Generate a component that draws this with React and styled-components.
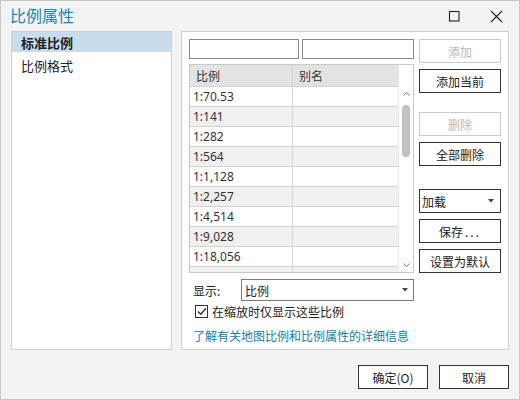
import React from "react";
import styled, { createGlobalStyle } from "styled-components";

const Global = createGlobalStyle`
  html, body { margin: 0; padding: 0; background: #f3f3f3; }
  * { box-sizing: border-box; }
  body { font-family: "Noto Sans", "Noto Sans CJK SC", sans-serif; font-size: 12px; color: #1e1e1e; }
`;

const Window = styled.div`
  width: 520px;
  height: 400px;
  background: #f3f3f3;
  border: 1px solid #c9c9c9;
  display: flex;
  flex-direction: column;
  overflow: hidden;
`;

const TitleBar = styled.div`
  height: 30px;
  flex-shrink: 0;
  display: flex;
  align-items: center;
  padding-left: 9px;
  padding-right: 16px;
`;

const Title = styled.div`
  flex: 1;
  font-family: "Noto Sans CJK SC", sans-serif;
  font-size: 16px;
  color: #1b87b0;
  line-height: 1;
  margin-top: -2px;
`;

const Ctrl = styled.div`
  width: 14px;
  height: 14px;
  display: flex;
  align-items: center;
  justify-content: center;
  margin-left: ${(p) => p.$gap || 0}px;
`;

const Body = styled.div`
  display: flex;
  gap: 9px;
  padding: 0 10px 0 10px;
  height: 319px;
  flex-shrink: 0;
`;

const LeftPanel = styled.div`
  width: 161px;
  background: #fff;
  border: 1px solid #cfcfcf;
  display: flex;
  flex-direction: column;
`;

const NavItem = styled.div`
  height: ${(p) => (p.$selected ? 20 : 26)}px;
  display: flex;
  align-items: center;
  padding-left: 9px;
  font-family: "Noto Sans CJK SC", sans-serif;
  font-size: 13px;
  font-weight: ${(p) => (p.$selected ? 700 : 400)};
  background: ${(p) => (p.$selected ? "#c8dcee" : "transparent")};
  color: #222;
`;

const RightPanel = styled.div`
  width: 328px;
  background: #fff;
  border: 1px solid #cfcfcf;
  padding: 7px 6px 0 7px;
  display: flex;
  gap: 5px;
`;

const MainCol = styled.div`
  width: 225px;
  display: flex;
  flex-direction: column;
`;

const InputRow = styled.div`
  display: flex;
  gap: 3px;
  height: 20px;
  flex-shrink: 0;
`;

const TextInput = styled.div`
  width: ${(p) => p.$w}px;
  height: 20px;
  border: 1px solid #8a8a8a;
  background: #fff;
`;

const Table = styled.div`
  margin-top: 5px;
  height: 209px;
  flex-shrink: 0;
  border: 1px solid #c9c9c9;
  display: flex;
  overflow: hidden;
`;

const Grid = styled.div`
  flex: 1;
  display: flex;
  flex-direction: column;
  overflow: hidden;
`;

const Row = styled.div`
  display: grid;
  grid-template-columns: 103px 1fr;
  height: ${(p) => (p.$header ? 22 : 20)}px;
  flex-shrink: 0;
  background: ${(p) => (p.$header ? "#e3e3e3" : p.$alt ? "#f0f0f0" : "#fff")};
  border-bottom: 1px solid #d3d3d3;
`;

const Cell = styled.div`
  display: flex;
  align-items: center;
  padding-left: ${(p) => (p.$header ? 6 : 3)}px;
  border-right: ${(p) => (p.$first ? "1px solid #d3d3d3" : "none")};
  font-family: ${(p) => (p.$header ? '"Noto Sans CJK SC", sans-serif' : '"Noto Sans", sans-serif')};
  font-size: 12px;
  line-height: 1;
  color: #333;
  white-space: nowrap;
`;

const Scroll = styled.div`
  width: 15px;
  flex-shrink: 0;
  display: flex;
  flex-direction: column;
  align-items: center;
  background: #fff;
  border-left: 1px solid #e6e6e6;
`;

const ScrollHead = styled.div`
  height: 22px;
  width: 100%;
  flex-shrink: 0;
`;

const Arrow = styled.div`
  height: 14px;
  display: flex;
  align-items: center;
  justify-content: center;
`;

const Thumb = styled.div`
  width: 8px;
  height: 52px;
  border-radius: 4px;
  background: #c2c2c2;
  margin-top: 4px;
`;

const Spacer = styled.div`
  flex: 1;
`;

const ShowRow = styled.div`
  margin-top: 6px;
  height: 22px;
  flex-shrink: 0;
  display: flex;
  align-items: center;
`;

const Label = styled.div`
  width: 52px;
  padding-left: 4px;
  font-family: "Noto Sans CJK SC", sans-serif;
  font-size: 12px;
  color: #222;
`;

const Select = styled.div`
  flex: 1;
  height: 22px;
  border: 1px solid #7a7a7a;
  display: flex;
  align-items: center;
  padding: 0 5px 0 3px;
  font-family: "Noto Sans CJK SC", sans-serif;
  font-size: 12px;
  color: #222;
  background: #fff;
`;

const SelText = styled.div`
  flex: 1;
`;

const CheckRow = styled.div`
  margin-top: 2px;
  display: flex;
  align-items: center;
  gap: 4px;
  padding-left: 6px;
  height: 16px;
  flex-shrink: 0;
  font-family: "Noto Sans CJK SC", sans-serif;
  font-size: 12px;
  color: #222;
`;

const Box = styled.div`
  width: 13px;
  height: 13px;
  border: 1px solid #333;
  display: flex;
  align-items: center;
  justify-content: center;
  background: #fff;
`;

const Link = styled.div`
  margin-top: 8px;
  padding-left: 4px;
  font-family: "Noto Sans CJK SC", sans-serif;
  font-size: 12px;
  color: #0f7fa6;
  white-space: nowrap;
`;

const BtnCol = styled.div`
  width: 82px;
  display: flex;
  flex-direction: column;
`;

const Btn = styled.div`
  width: ${(p) => p.$w || 82}px;
  height: 24px;
  margin-top: ${(p) => p.$mt || 0}px;
  border: 1px solid ${(p) => (p.$disabled ? "#cccccc" : "#333")};
  color: ${(p) => (p.$disabled ? "#b8b8b8" : "#222")};
  background: #fff;
  display: flex;
  align-items: center;
  justify-content: ${(p) => (p.$drop ? "space-between" : "center")};
  padding: ${(p) => (p.$drop ? "0 6px 0 2px" : "0")};
  font-family: "Noto Sans CJK SC", sans-serif;
  font-size: 12px;
  flex-shrink: 0;
`;

const Dots = styled.span`
  letter-spacing: 2px;
  margin-left: 2px;
`;

const Footer = styled.div`
  flex: 1;
  display: flex;
  justify-content: flex-end;
  align-items: flex-start;
  gap: 11px;
  padding: 15px 10px 0 0;
`;

const Caret = () => (
  <svg width="6" height="4" viewBox="0 0 6 4">
    <path d="M0 0 L6 0 L3 3.5 Z" fill="#444" />
  </svg>
);

const scales = ["1:70.53", "1:141", "1:282", "1:564", "1:1,128", "1:2,257", "1:4,514", "1:9,028", "1:18,056", "1:36,112"];

export default function App() {
  return (
    <>
      <Global />
      <Window>
        <TitleBar>
          <Title>比例属性</Title>
          <Ctrl>
            <svg width="12" height="12" viewBox="0 0 12 12">
              <rect x="1.5" y="1.5" width="9.5" height="9.5" fill="none" stroke="#222" strokeWidth="1.1" />
            </svg>
          </Ctrl>
          <Ctrl $gap={28}>
            <svg width="13" height="13" viewBox="0 0 13 13">
              <path d="M1 1 L12 12 M12 1 L1 12" stroke="#222" strokeWidth="1.1" />
            </svg>
          </Ctrl>
        </TitleBar>
        <Body>
          <LeftPanel>
            <NavItem $selected>标准比例</NavItem>
            <NavItem>比例格式</NavItem>
          </LeftPanel>
          <RightPanel>
            <MainCol>
              <InputRow>
                <TextInput $w={110} />
                <TextInput $w={112} />
              </InputRow>
              <Table>
                <Grid>
                  <Row $header>
                    <Cell $header $first>比例</Cell>
                    <Cell $header>别名</Cell>
                  </Row>
                  {scales.map((s, i) => (
                    <Row key={s} $alt={i % 2 === 1}>
                      <Cell $first>{s}</Cell>
                      <Cell />
                    </Row>
                  ))}
                </Grid>
                <Scroll>
                  <ScrollHead />
                  <Arrow>
                    <svg width="7" height="4" viewBox="0 0 7 4">
                      <path d="M0.5 3.5 L3.5 0.5 L6.5 3.5" fill="none" stroke="#777" strokeWidth="1" />
                    </svg>
                  </Arrow>
                  <Thumb />
                  <Spacer />
                  <Arrow>
                    <svg width="7" height="4" viewBox="0 0 7 4">
                      <path d="M0.5 0.5 L3.5 3.5 L6.5 0.5" fill="none" stroke="#777" strokeWidth="1" />
                    </svg>
                  </Arrow>
                </Scroll>
              </Table>
              <ShowRow>
                <Label>显示:</Label>
                <Select>
                  <SelText>比例</SelText>
                  <Caret />
                </Select>
              </ShowRow>
              <CheckRow>
                <Box>
                  <svg width="10" height="9" viewBox="0 0 10 9">
                    <path d="M1 4.5 L3.8 7.3 L9 1.2" fill="none" stroke="#333" strokeWidth="1.4" />
                  </svg>
                </Box>
                在缩放时仅显示这些比例
              </CheckRow>
              <Link>了解有关地图比例和比例属性的详细信息</Link>
            </MainCol>
            <BtnCol>
              <Btn $disabled>添加</Btn>
              <Btn $mt={6}>添加当前</Btn>
              <Btn $mt={19} $disabled>删除</Btn>
              <Btn $mt={6}>全部删除</Btn>
              <Btn $mt={23} $drop>
                <span>加载</span>
                <Caret />
              </Btn>
              <Btn $mt={6}>保存<Dots>...</Dots></Btn>
              <Btn $mt={6}>设置为默认</Btn>
            </BtnCol>
          </RightPanel>
        </Body>
        <Footer>
          <Btn $w={70}>确定(O)</Btn>
          <Btn $w={70}>取消</Btn>
        </Footer>
      </Window>
    </>
  );
}
